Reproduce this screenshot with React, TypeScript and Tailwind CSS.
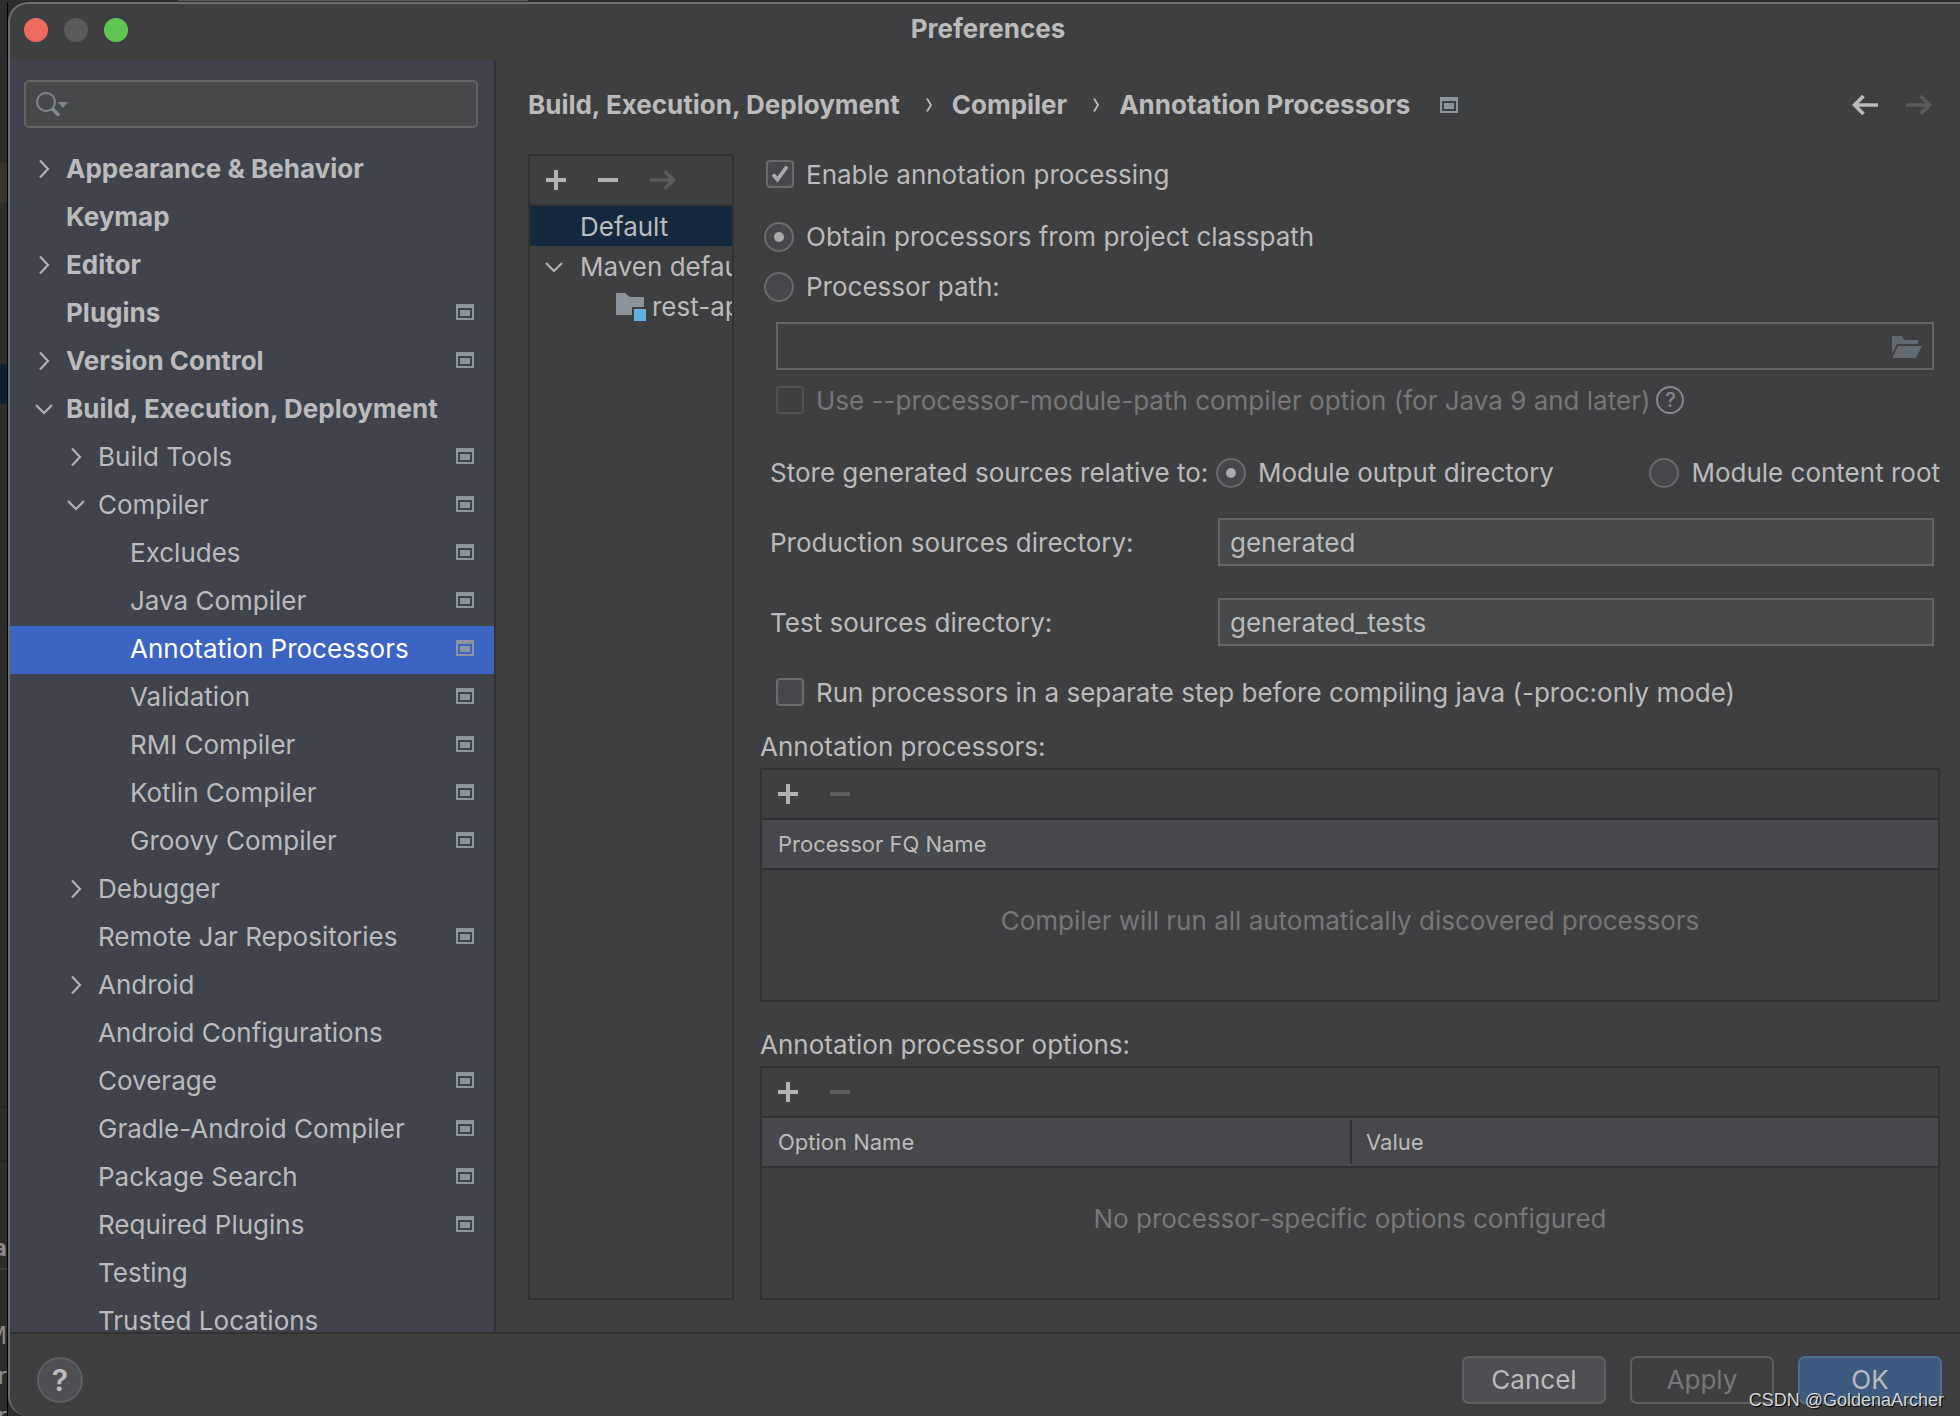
import { useState, type ReactNode } from "react";

type NavItem = {
  label: string;
  level: 0 | 1 | 2;
  state?: "open" | "closed";
  project?: boolean;
};

const navItems: NavItem[] = [
  { label: "Appearance & Behavior", level: 0, state: "closed" },
  { label: "Keymap", level: 0 },
  { label: "Editor", level: 0, state: "closed" },
  { label: "Plugins", level: 0, project: true },
  { label: "Version Control", level: 0, state: "closed", project: true },
  { label: "Build, Execution, Deployment", level: 0, state: "open" },
  { label: "Build Tools", level: 1, state: "closed", project: true },
  { label: "Compiler", level: 1, state: "open", project: true },
  { label: "Excludes", level: 2, project: true },
  { label: "Java Compiler", level: 2, project: true },
  { label: "Annotation Processors", level: 2, project: true },
  { label: "Validation", level: 2, project: true },
  { label: "RMI Compiler", level: 2, project: true },
  { label: "Kotlin Compiler", level: 2, project: true },
  { label: "Groovy Compiler", level: 2, project: true },
  { label: "Debugger", level: 1, state: "closed" },
  { label: "Remote Jar Repositories", level: 1, project: true },
  { label: "Android", level: 1, state: "closed" },
  { label: "Android Configurations", level: 1 },
  { label: "Coverage", level: 1, project: true },
  { label: "Gradle-Android Compiler", level: 1, project: true },
  { label: "Package Search", level: 1, project: true },
  { label: "Required Plugins", level: 1, project: true },
  { label: "Testing", level: 1 },
  { label: "Trusted Locations", level: 1 },
];

const indent = ["pl-[24px]", "pl-[56px]", "pl-[88px]"];

const ProjectIcon = () => (
  <svg width="18" height="16" viewBox="0 0 18 16" className="shrink-0" fill="#8b969f">
    <path fillRule="evenodd" d="M0 0h18v16H0zM2 4v10h14V4z" />
    <path d="M4 6h10v6H4z" />
  </svg>
);

const Chevron = ({ open }: { open: boolean }) => (
  <svg width="20" height="20" viewBox="0 0 20 20" fill="none" stroke="#afb1b3" strokeWidth="2.2">
    {open ? <path d="M2 6l8 8 8-8" /> : <path d="M6 1.500l8 8.500-8 8.500" />}
  </svg>
);

const PlusIcon = () => (
  <svg width="20" height="20" viewBox="0 0 20 20" fill="#afb1b3">
    <path d="M8 0h4v8h8v4h-8v8H8v-8H0V8h8z" />
  </svg>
);

const MinusIcon = ({ disabled }: { disabled?: boolean }) => (
  <svg width="20" height="20" viewBox="0 0 20 20" fill={disabled ? "#5b5d5e" : "#afb1b3"}>
    <path d="M0 8h20v4H0z" />
  </svg>
);

const ArrowIcon = ({ back, color }: { back?: boolean; color: string }) => (
  <svg width="26" height="20" viewBox="0 0 26 20" fill="none" stroke={color} strokeWidth="3.600">
    {back ? <path d="M26 10H3M11.500 1L2.500 10l9 9" /> : <path d="M0 10h23M14.500 1l9 9-9 9" />}
  </svg>
);

const ModuleIcon = () => (
  <svg width="30" height="28" viewBox="0 0 30 28" className="shrink-0">
    <path d="M0 0h9l5 4h14v10H16v8H0z" fill="#8b939b" />
    <path d="M18 16h12v12H18z" fill="#62b1dd" />
  </svg>
);

const FolderIcon = () => (
  <svg width="30" height="22" viewBox="0 0 30 22" fill="#616a71">
    <path d="M0 0h10l2 4h14v4H5L0 18z" />
    <path d="M6 10h24l-6 12H0z" />
  </svg>
);

const SearchIcon = () => (
  <svg width="32" height="26" viewBox="0 0 32 26" fill="none" stroke="#7d8990">
    <circle cx="10" cy="10" r="9" strokeWidth="2" />
    <path d="M16 16.500l7 7" strokeWidth="3.500" />
    <path d="M22 10h10l-5 6z" fill="#7d8990" stroke="none" />
  </svg>
);

const Separator = () => (
  <span className="grid w-[52px] place-items-center pl-[6px]">
    <svg width="8" height="16" viewBox="0 0 8 16" fill="none" stroke="#bbbbbb" strokeWidth="1.800">
      <path d="M2 1.500l4 6.500-4 6.500" />
    </svg>
  </span>
);

const inputStyle =
  "h-[48px] w-full min-w-0 border-2 border-[#646464] bg-[#45494a] px-[10px] text-[#bbbbbb] outline-none";

type OptionProps = {
  type: "checkbox" | "radio";
  label: string;
  name?: string;
  checked: boolean;
  disabled?: boolean;
  onChange: () => void;
};

const Option = ({ type, label, name, checked, disabled, onChange }: OptionProps) => (
  <label className={`flex items-center gap-[12px] whitespace-nowrap ${disabled ? "text-[#777777]" : ""}`}>
    <span className="relative grid shrink-0 place-items-center">
      <input
        type={type}
        name={name}
        checked={checked}
        disabled={disabled}
        onChange={onChange}
        className={`appearance-none border-2 ${
          type === "radio" ? "size-[30px] rounded-full" : "size-[28px] rounded-[4px]"
        } ${disabled ? "border-[#515354]" : "border-[#6b6b6b] bg-[#43494a]"}`}
      />
      {checked && type === "radio" && (
        <span className="pointer-events-none absolute size-[10px] rounded-full bg-[#a9a9a9]" />
      )}
      {checked && type === "checkbox" && (
        <svg
          width="18"
          height="18"
          viewBox="0 0 18 18"
          className="pointer-events-none absolute"
          fill="none"
          stroke="#a9a9a9"
          strokeWidth="3.800"
        >
          <path d="M2 9.500l4.500 5L16 1.500" />
        </svg>
      )}
    </span>
    <span className={type === "checkbox" ? "pt-[2px]" : ""}>{label}</span>
  </label>
);

type TablePanelProps = {
  title: string;
  columns: string[];
  empty: string;
};

const TablePanel = ({ title, columns, empty }: TablePanelProps) => (
  <section>
    <h2 className="flex h-[42px] items-center">{title}</h2>
    <div className="h-[234px] border-2 border-[#323232]">
      <div className="flex h-[48px] items-center gap-[32px] px-[16px]">
        <button aria-label="Add">
          <PlusIcon />
        </button>
        <button aria-label="Remove" disabled>
          <MinusIcon disabled />
        </button>
      </div>
      <table className="w-full table-fixed border-y-2 border-[#323232] bg-[#45494b] text-[22px]">
        <thead>
          <tr className="h-[50px]">
            {columns.map((column, i) => (
              <th key={column} className="p-0 text-left font-normal">
                <div
                  className={`flex h-[44px] items-center ${
                    i > 0 ? "border-l-2 border-[#323232] pl-[14px]" : "pl-[16px]"
                  }`}
                >
                  {column}
                </div>
              </th>
            ))}
          </tr>
        </thead>
      </table>
      <p className="pt-[34px] text-center leading-[34px] text-[#777777]">{empty}</p>
    </div>
  </section>
);

type FooterButtonProps = {
  className: string;
  disabled?: boolean;
  children: ReactNode;
};

const FooterButton = ({ className, disabled, children }: FooterButtonProps) => (
  <button disabled={disabled} className={`h-[48px] w-[144px] rounded-[7px] border-2 ${className}`}>
    {children}
  </button>
);

const Sidebar = () => {
  const [selected, setSelected] = useState("Annotation Processors");

  return (
    <aside className="flex w-[486px] shrink-0 flex-col overflow-hidden border-r-2 border-[#323232] bg-[#3f434c]">
      <div className="relative mt-[20px] mr-[16px] mb-[18px] ml-[14px]">
        <input
          type="search"
          aria-label="Search preferences"
          className="h-[48px] w-full rounded-[5px] border-2 border-[#646464] bg-[#45494a] pr-3 pl-[48px] outline-none"
        />
        <span className="pointer-events-none absolute top-[12px] left-[12px]">
          <SearchIcon />
        </span>
      </div>
      <nav>
        {navItems.map((item) => (
          <button
            key={item.label}
            onClick={() => setSelected(item.label)}
            className={`flex h-[48px] w-full items-center pr-[20px] pb-[2px] text-left whitespace-nowrap ${indent[item.level]} ${
              item.level === 0 ? "font-bold" : ""
            } ${selected === item.label ? "bg-[#3c64c3] text-white" : ""}`}
          >
            <span className="w-[32px] shrink-0">{item.state && <Chevron open={item.state === "open"} />}</span>
            <span className="flex-1">{item.label}</span>
            {item.project && (
              <span className="pb-[2px]">
                <ProjectIcon />
              </span>
            )}
          </button>
        ))}
      </nav>
    </aside>
  );
};

const ProfilePanel = () => (
  <div className="w-[206px] shrink-0 overflow-hidden border-2 border-[#323232] whitespace-nowrap">
    <div className="flex h-[50px] items-center gap-[32px] border-b-2 border-[#323232] px-[16px]">
      <button aria-label="Add profile">
        <PlusIcon />
      </button>
      <button aria-label="Remove profile">
        <MinusIcon />
      </button>
      <button aria-label="Move to" disabled>
        <ArrowIcon color="#5b5b5b" />
      </button>
    </div>
    <div className="flex h-[40px] items-center bg-[#15293e] pt-[2px] pl-[50px]">Default</div>
    <div className="flex h-[40px] items-center pt-[2px] pl-[14px]">
      <span className="w-[36px] shrink-0">
        <Chevron open />
      </span>
      Maven default
    </div>
    <div className="flex h-[40px] items-center gap-[6px] pt-[2px] pl-[86px]">
      <ModuleIcon />
      rest-api
    </div>
  </div>
);

const ProcessorForm = () => {
  const [enabled, setEnabled] = useState(true);
  const [source, setSource] = useState("classpath");
  const [relative, setRelative] = useState("output");
  const [production, setProduction] = useState("generated");
  const [test, setTest] = useState("generated_tests");
  const [separate, setSeparate] = useState(false);

  return (
    <div className="min-w-0 flex-1">
      <div className="pl-[4px]">
        <div className="flex h-[40px] items-center pl-[2px]">
          <Option type="checkbox" label="Enable annotation processing" checked={enabled} onChange={() => setEnabled(!enabled)} />
        </div>
        <div className="mt-[18px] flex h-[50px] items-center">
          <Option
            type="radio"
            name="source"
            label="Obtain processors from project classpath"
            checked={source === "classpath"}
            onChange={() => setSource("classpath")}
          />
        </div>
        <div className="flex h-[50px] items-center">
          <Option type="radio" name="source" label="Processor path:" checked={source === "path"} onChange={() => setSource("path")} />
        </div>
      </div>

      <div className="pr-[6px] pl-[16px]">
        <div className="relative mt-[10px]">
          <input
            type="text"
            aria-label="Processor path"
            disabled
            className="h-[48px] w-full border-2 border-[#646464] bg-transparent pr-[50px] pl-[10px]"
          />
          <button aria-label="Browse" disabled className="absolute top-[14px] right-[12px]">
            <FolderIcon />
          </button>
        </div>
        <div className="mt-[10px] flex h-[40px] items-center gap-[6px]">
          <Option
            type="checkbox"
            label="Use --processor-module-path compiler option (for Java 9 and later)"
            checked={false}
            disabled
            onChange={() => {}}
          />
          <button
            aria-label="Help on module path"
            className="grid size-[28px] place-items-center rounded-full border-2 border-[#7f8b91] text-[20px] leading-none font-medium text-[#7f8b91]"
          >
            ?
          </button>
        </div>
      </div>

      <div className="mt-[28px] grid grid-cols-[446px_1fr] pl-[10px]">
        <span className="flex h-[50px] items-center">Store generated sources relative to:</span>
        <div className="flex items-center justify-between">
          <Option
            type="radio"
            name="relative"
            label="Module output directory"
            checked={relative === "output"}
            onChange={() => setRelative("output")}
          />
          <Option
            type="radio"
            name="relative"
            label="Module content root"
            checked={relative === "content"}
            onChange={() => setRelative("content")}
          />
        </div>
      </div>
      <div className="mt-[20px] grid grid-cols-[448px_1fr] items-center gap-y-[32px] pr-[6px] pl-[10px]">
        <label htmlFor="production" className="pt-[2px]">
          Production sources directory:
        </label>
        <input id="production" type="text" value={production} onChange={(e) => setProduction(e.target.value)} className={inputStyle} />
        <label htmlFor="test" className="pt-[2px]">
          Test sources directory:
        </label>
        <input id="test" type="text" value={test} onChange={(e) => setTest(e.target.value)} className={inputStyle} />
      </div>

      <div className="mt-[26px] flex h-[40px] items-center pl-[16px]">
        <Option
          type="checkbox"
          label="Run processors in a separate step before compiling java (-proc:only mode)"
          checked={separate}
          onChange={() => setSeparate(!separate)}
        />
      </div>

      <div className="mt-[14px] grid gap-[22px]">
        <TablePanel
          title="Annotation processors:"
          columns={["Processor FQ Name"]}
          empty="Compiler will run all automatically discovered processors"
        />
        <TablePanel
          title="Annotation processor options:"
          columns={["Option Name", "Value"]}
          empty="No processor-specific options configured"
        />
      </div>
    </div>
  );
};

// Slice of the editor window that shows behind the dialog
const EditorEdge = () => (
  <div className="flex w-[8px] shrink-0 flex-col items-end overflow-hidden border-r border-black bg-[#2c2d2e] text-[24px] leading-[40px] text-[#8a8a8a]">
    <div className="mt-[161px] h-[40px] w-full shrink-0 bg-[#37342c]" />
    <div className="mt-[161px] h-[40px] w-full shrink-0 bg-[#0e2030]" />
    <div className="mt-[702px] h-[54px] w-full shrink-0 border-t-2 border-[#232425]" />
    <div className="h-[68px] w-full shrink-0 border-t-2 border-[#232425]" />
    <span className="font-bold">a</span>
    <div className="mb-[46px] w-full shrink-0 border-t-2 border-[#3a3b3c]" />
    <span>M</span>
    <span>ar</span>
    <span>ar</span>
  </div>
);

const App = () => (
  <div className="flex h-screen flex-col overflow-hidden bg-[#2c2d2e] font-['Inter',sans-serif] text-[26px] leading-[32px] text-[#bbbbbb]">
    <div className="h-[2px] shrink-0 bg-[#2c2d2e] pl-[178px]">
      <div className="h-px w-[350px] bg-[#5c5e5e]" />
    </div>
    <div className="flex min-h-0 flex-1">
      <EditorEdge />
      <div className="flex min-w-0 flex-1 flex-col overflow-hidden rounded-l-[20px] border-t-2 border-l-2 border-[#6b6d6e] bg-[#3e3f41]">
        <header className="relative flex h-[56px] shrink-0 items-center pb-[6px] pl-[6px]">
          <div className="absolute top-[14px] left-[14px] flex gap-[16px]">
            <button aria-label="Close" className="size-[24px] rounded-full bg-[#ed6a5e]" />
            <button aria-label="Minimize" className="size-[24px] rounded-full bg-[#595a5c]" />
            <button aria-label="Zoom" className="size-[24px] rounded-full bg-[#61c554]" />
          </div>
          <h1 className="w-full text-center font-bold">Preferences</h1>
        </header>

        <div className="flex min-h-0 flex-1">
          <Sidebar />
          <main className="flex min-w-0 flex-1 flex-col pt-[20px] pr-[20px] pb-[32px] pl-[32px]">
            <div className="flex h-[50px] items-center justify-between">
              <nav aria-label="Breadcrumb" className="flex items-center font-bold whitespace-nowrap">
                <a href="#build">Build, Execution, Deployment</a>
                <Separator />
                <a href="#compiler">Compiler</a>
                <Separator />
                <span>Annotation Processors</span>
                <span className="ml-[30px]">
                  <ProjectIcon />
                </span>
              </nav>
              <div className="flex gap-[28px] pr-[8px]">
                <button aria-label="Back">
                  <ArrowIcon back color="#bbbbbb" />
                </button>
                <button aria-label="Forward" disabled>
                  <ArrowIcon color="#5b5b5b" />
                </button>
              </div>
            </div>
            <div className="mt-[24px] flex min-h-0 flex-1 gap-[26px]">
              <ProfilePanel />
              <ProcessorForm />
            </div>
          </main>
        </div>

        <footer className="relative flex h-[84px] shrink-0 items-center justify-between border-t-2 border-[#323232] pt-[10px] pr-[18px] pl-[27px]">
          <button
            aria-label="Help"
            className="grid size-[46px] place-items-center rounded-full border-2 border-[#5e6060] bg-[#4c5052] text-[30px] font-semibold"
          >
            ?
          </button>
          <div className="flex gap-[24px]">
            <FooterButton className="border-[#5e6060] bg-[#4c5052]">Cancel</FooterButton>
            <FooterButton disabled className="border-[#5e6060] text-[#777777]">
              Apply
            </FooterButton>
            <FooterButton className="border-[#4c708c] bg-[#3d5a80]">OK</FooterButton>
          </div>
          <span className="absolute right-[16px] bottom-[4px] font-['Liberation_Sans',sans-serif] text-[18px] leading-[24px] text-[#d8d8d8] [text-shadow:1px_1px_1px_#000]">
            CSDN @GoldenaArcher
          </span>
        </footer>
      </div>
    </div>
  </div>
);

export default App;
